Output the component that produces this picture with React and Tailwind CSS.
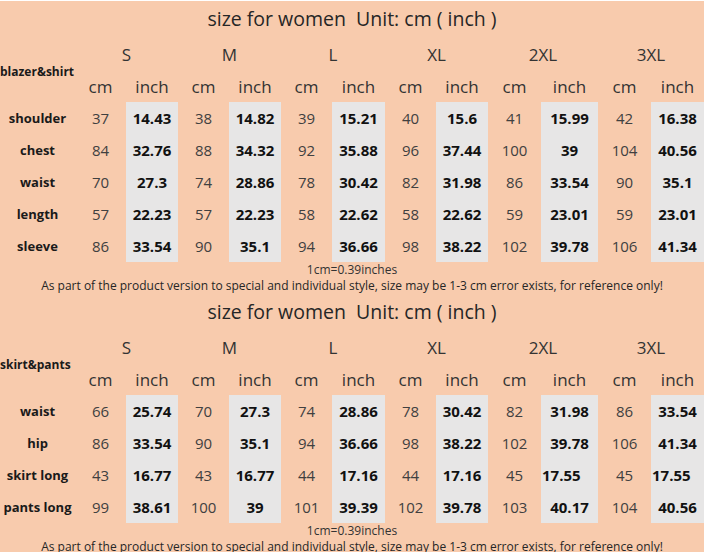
import React from 'react'

const sizes = ['S', 'M', 'L', 'XL', '2XL', '3XL']

const tops = [
  { label: 'shoulder', cm: [37, 38, 39, 40, 41, 42], inch: ['14.43', '14.82', '15.21', '15.6', '15.99', '16.38'] },
  { label: 'chest', cm: [84, 88, 92, 96, 100, 104], inch: ['32.76', '34.32', '35.88', '37.44', '39', '40.56'] },
  { label: 'waist', cm: [70, 74, 78, 82, 86, 90], inch: ['27.3', '28.86', '30.42', '31.98', '33.54', '35.1'] },
  { label: 'length', cm: [57, 57, 58, 58, 59, 59], inch: ['22.23', '22.23', '22.62', '22.62', '23.01', '23.01'] },
  { label: 'sleeve', cm: [86, 90, 94, 98, 102, 106], inch: ['33.54', '35.1', '36.66', '38.22', '39.78', '41.34'] },
]

const bottoms = [
  { label: 'waist', cm: [66, 70, 74, 78, 82, 86], inch: ['25.74', '27.3', '28.86', '30.42', '31.98', '33.54'] },
  { label: 'hip', cm: [86, 90, 94, 98, 102, 106], inch: ['33.54', '35.1', '36.66', '38.22', '39.78', '41.34'] },
  { label: 'skirt long', cm: [43, 43, 44, 44, 45, 45], inch: ['16.77', '16.77', '17.16', '17.16', '17.55', '17.55'], leftFrom: 4 },
  { label: 'pants long', cm: [99, 100, 101, 102, 103, 104], inch: ['38.61', '39', '39.39', '39.78', '40.17', '40.56'] },
]

const cols = 'grid grid-cols-[75px_51px_52px_51px_52px_51px_53px_51px_52px_53px_57px_53px_53px]'

const SizeTable = ({ name, rows }) => (
  <div>
    <div className="h-[38px] flex items-center justify-center whitespace-pre text-[19.5px] text-[#262626]">
      {'size for women  Unit: cm ( inch )'}
    </div>

    <div className={cols}>
      {/* header: label spans both header rows */}
      <div className="row-span-2 flex items-center text-[12px] font-bold text-[#1a1a1a] pt-1">{name}</div>
      {sizes.map((s) => (
        <div key={s} className="col-span-2 h-8 flex items-center justify-center text-[17px] text-[#333]">{s}</div>
      ))}
      {sizes.map((s) => (
        <React.Fragment key={s}>
          <div className="h-8 flex items-center justify-center text-[17px] text-[#333]">cm</div>
          <div className="h-8 flex items-center justify-center text-[17px] text-[#333]">inch</div>
        </React.Fragment>
      ))}

      {rows.map((r) => (
        <React.Fragment key={r.label}>
          <div className="h-8 flex items-center justify-center text-[13px] font-bold text-[#1a1a1a]">{r.label}</div>
          {r.cm.map((c, i) => (
            <React.Fragment key={i}>
              <div className="h-8 flex items-center justify-center text-[15px] text-[#404040]">{c}</div>
              <div
                className={
                  r.leftFrom !== undefined && i >= r.leftFrom
                    ? 'h-8 flex items-center pl-px bg-[#e7e6e6] text-[15px] font-bold text-[#111]'
                    : 'h-8 flex items-center justify-center bg-[#e7e6e6] text-[15px] font-bold text-[#111]'
                }
              >
                {r.inch[i]}
              </div>
            </React.Fragment>
          ))}
        </React.Fragment>
      ))}
    </div>

    <div className="h-4 flex items-center justify-center text-[12px] text-[#333]">1cm=0.39inches</div>
    <div className="h-[15px] flex items-center justify-center whitespace-nowrap text-[12px] text-[#262626]">
      As part of the product version to special and individual style, size may be 1-3 cm error exists, for reference only!
    </div>
  </div>
)

export default function App() {
  return (
    <div className="w-[704px] h-[552px] overflow-hidden bg-[#f8cbad] font-['Open_Sans',sans-serif] leading-none">
      <div className="h-px bg-white" />
      <div className="-mt-px">
        <SizeTable name="blazer&shirt" rows={tops} />
        <SizeTable name="skirt&pants" rows={bottoms} />
      </div>
    </div>
  )
}
